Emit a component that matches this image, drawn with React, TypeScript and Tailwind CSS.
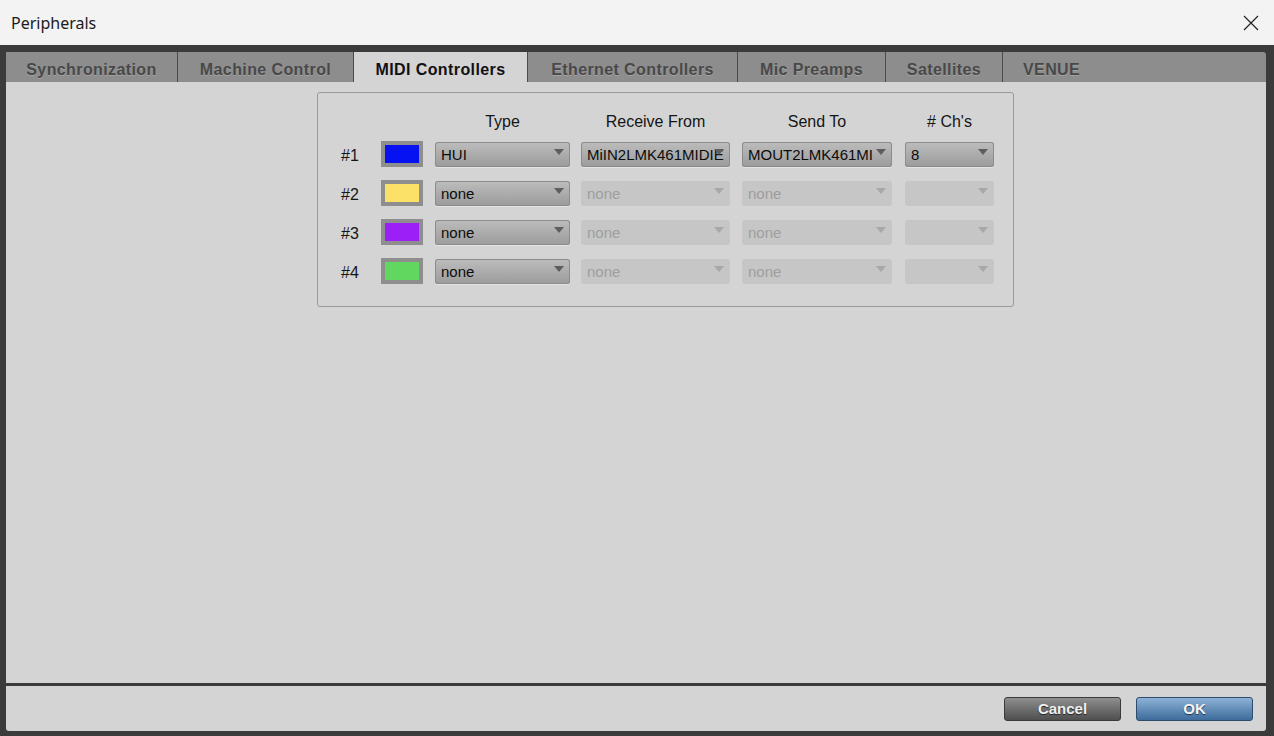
import React from 'react';
import clsx from 'clsx';

type Row = {
  n: string;
  color: string;
  type: string;
  recv: string;
  send: string;
  ch: string;
  enabled: boolean;
};

const rows: Row[] = [
  { n: '#1', color: 'bg-[#0612f2]', type: 'HUI', recv: 'MiIN2LMK461MIDIE', send: 'MOUT2LMK461MI', ch: '8', enabled: true },
  { n: '#2', color: 'bg-[#fbe168]', type: 'none', recv: 'none', send: 'none', ch: '', enabled: false },
  { n: '#3', color: 'bg-[#9b1ff6]', type: 'none', recv: 'none', send: 'none', ch: '', enabled: false },
  { n: '#4', color: 'bg-[#62d75f]', type: 'none', recv: 'none', send: 'none', ch: '', enabled: false },
];

const tabs = [
  { label: 'Synchronization', w: 'w-[172px]' },
  { label: 'Machine Control', w: 'w-[176px]' },
  { label: 'MIDI Controllers', w: 'w-[174px]', active: true },
  { label: 'Ethernet Controllers', w: 'w-[210px]' },
  { label: 'Mic Preamps', w: 'w-[148px]' },
  { label: 'Satellites', w: 'w-[117px]' },
];

const Drop: React.FC<{ className: string; text: string; disabled?: boolean }> = ({ className, text, disabled }) => (
  <div
    className={clsx(
      'relative h-[25px] overflow-hidden rounded-[3px] text-[15px]',
      className,
      disabled
        ? 'bg-[#c6c6c6] text-[#9e9e9e]'
        : 'bg-linear-to-b from-[#bdbdbd] to-[#9b9b9b] text-[#0c0c0c] shadow-[inset_0_0_0_1px_#8c8c8c,0_1px_0_#e4e4e4]'
    )}
  >
    <span className="absolute left-[6px] top-0 whitespace-nowrap leading-[25px]">{text}</span>
    <span
      className={clsx(
        'absolute right-[6px] top-[7px] h-0 w-0 border-x-[5px] border-t-[6px] border-x-transparent',
        disabled ? 'border-t-[#a8a8a8]' : 'border-t-[#5e5e5e]'
      )}
    />
  </div>
);

export default function App() {
  return (
    <div className="flex h-[736px] w-[1274px] flex-col overflow-hidden bg-[#3b3b3b] font-['Liberation_Sans',Arial,sans-serif]">
      {/* title bar */}
      <div className="flex h-[45px] shrink-0 items-center justify-between bg-[#f3f3f3] pl-[11px] pr-[15px]">
        <span className="font-['Noto_Sans',sans-serif] text-[16px] text-[#1a1a1a]">Peripherals</span>
        <svg width="16" height="16" viewBox="0 0 16 16" className="text-[#222]">
          <path d="M1 1L15 15M15 1L1 15" stroke="currentColor" strokeWidth="1.2" fill="none" />
        </svg>
      </div>

      <div className="flex flex-1 flex-col pb-[5px] pl-[6px] pr-[8px] pt-[7px]">
        {/* tabs */}
        <div className="flex h-[30px] shrink-0">
          {tabs.map((t) => (
            <div
              key={t.label}
              className={clsx(
                'flex items-center justify-center border-r border-[#4b4b4b] pt-[6px] text-[16px] font-bold tracking-[0.4px]',
                t.w,
                t.active
                  ? 'bg-[#d4d4d4] text-[#111]'
                  : 'bg-[#8d8d8d] text-[#484848] [text-shadow:0_1px_0_#a2a2a2]'
              )}
            >
              {t.label}
            </div>
          ))}
          <div className="flex flex-1 items-center rounded-tr-[3px] bg-[#8d8d8d] pl-[20px] pt-[6px] text-[16px] font-bold tracking-[0.4px] text-[#484848] [text-shadow:0_1px_0_#a2a2a2]">
            VENUE
          </div>
        </div>

        {/* content */}
        <div className="flex-1 bg-[#d4d4d4] pt-[10px]">
          <div className="ml-[311px] h-[215px] w-[697px] rounded-[3px] border border-[#9a9a9a] pl-[23px] pt-[19px]">
            <div className="flex h-[20px] items-center text-[16px] text-[#151515]">
              <div className="w-[40px]" />
              <div className="w-[42px]" />
              <div className="ml-[12px] w-[135px] text-center">Type</div>
              <div className="ml-[11px] w-[149px] text-center">Receive From</div>
              <div className="ml-[12px] w-[150px] text-center">Send To</div>
              <div className="ml-[13px] w-[89px] text-center"># Ch's</div>
            </div>
            <div className="mt-[10px] flex flex-col gap-[14px]">
              {rows.map((r) => (
                <div key={r.n} className="flex h-[25px] items-center">
                  <div className="w-[40px] pt-[2px] text-[16px] text-[#151515]">{r.n}</div>
                  <div className="-mt-[2px] flex h-[26px] w-[42px] items-center justify-center bg-[#8e8e8e]">
                    <div className={clsx('h-[18px] w-[34px]', r.color)} />
                  </div>
                  <Drop className="ml-[12px] w-[135px]" text={r.type} />
                  <Drop className="ml-[11px] w-[149px]" text={r.recv} disabled={!r.enabled} />
                  <Drop className="ml-[12px] w-[150px]" text={r.send} disabled={!r.enabled} />
                  <Drop className="ml-[13px] w-[89px]" text={r.ch} disabled={!r.enabled} />
                </div>
              ))}
            </div>
          </div>
        </div>

        {/* footer */}
        <div className="mt-[3px] flex h-[45px] shrink-0 items-center justify-end gap-[15px] rounded-b-[3px] bg-[#d4d4d4] pr-[13px]">
          <button className="h-[24px] w-[117px] rounded-[3px] border border-[#3a3a3a] bg-linear-to-b from-[#8f8f8f] to-[#4f4f4f] text-[15px] font-bold text-[#f0f0f0] [text-shadow:0_1px_1px_#222]">
            Cancel
          </button>
          <button className="h-[24px] w-[117px] rounded-[3px] border border-[#2d4c6e] bg-linear-to-b from-[#8db2d6] to-[#3e6c9b] text-[15px] font-bold text-[#f4f4f4] [text-shadow:0_1px_1px_#1d3550]">
            OK
          </button>
        </div>
      </div>
    </div>
  );
}
